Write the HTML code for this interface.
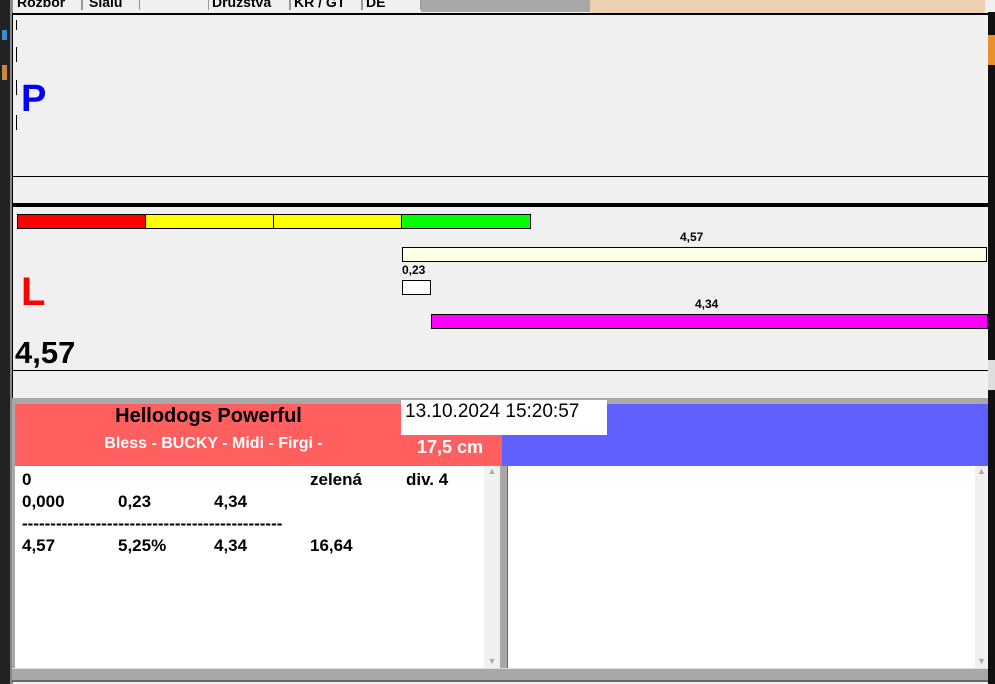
<!DOCTYPE html>
<html><head><style>
*{margin:0;padding:0;box-sizing:border-box}
body{width:995px;height:684px;overflow:hidden;background:#f0f0f0;font-family:"Liberation Sans",Arial,sans-serif;position:relative}
.a{position:absolute}
.b{font-weight:bold}
</style></head><body>
<div class="a" style="left:0;top:0;width:995px;height:13px;background:#f0f0f0"></div>
<div class="a" style="left:421px;top:0;width:169px;height:12px;background:#a8a8a8"></div>
<div class="a" style="left:590px;top:0;width:395px;height:13px;background:#ecd0b0"></div>
<div class="a" style="left:12px;top:-7px;width:410px;height:17px;font-size:14px;font-weight:bold;white-space:nowrap;overflow:hidden">
<span style="display:inline-block;border:1px solid #999;padding:0 4px;width:70px">Rozbor</span><span style="display:inline-block;border:1px solid #999;padding:0 6px;width:58px">Slalu</span><span style="display:inline-block;width:68px"></span><span style="display:inline-block;border:1px solid #999;padding:0 3px;width:82px">Družstva</span><span style="display:inline-block;border:1px solid #999;padding:0 3px;width:72px">KR / GT</span><span style="display:inline-block;border:1px solid #999;padding:0 3px;width:59px">DE</span></div>
<div class="a" style="left:0;top:0;width:10px;height:684px;background:#222"></div>
<div class="a" style="left:2px;top:30px;width:5px;height:10px;background:#3a8ad0"></div>
<div class="a" style="left:2px;top:65px;width:5px;height:15px;background:#c88a3a"></div>
<div class="a" style="left:10px;top:0;width:3px;height:684px;background:#888"></div>
<div class="a" style="left:988px;top:12px;width:7px;height:672px;background:#111"></div>
<div class="a" style="left:988px;top:35px;width:7px;height:30px;background:#e8902a"></div>
<div class="a" style="left:988px;top:360px;width:7px;height:30px;background:#ddd"></div>
<div class="a" style="left:12px;top:13px;width:976px;height:2px;background:#000"></div>
<div class="a" style="left:12px;top:15px;width:1px;height:385px;background:#000"></div>
<div class="a" style="left:16px;top:20px;width:1px;height:10px;background:#000"></div>
<div class="a" style="left:16px;top:47px;width:1px;height:15px;background:#000"></div>
<div class="a" style="left:16px;top:80px;width:1px;height:15px;background:#000"></div>
<div class="a" style="left:16px;top:115px;width:1px;height:15px;background:#000"></div>
<div class="a b" style="left:21px;top:80px;font-size:38px;color:#0000ff;line-height:1">P</div>
<div class="a" style="left:12px;top:176px;width:976px;height:1px;background:#000"></div>
<div class="a" style="left:12px;top:203px;width:976px;height:4px;background:#000"></div>
<div class="a" style="left:17px;top:214px;width:129px;height:15px;background:#f00;border:1px solid #000"></div>
<div class="a" style="left:145px;top:214px;width:129px;height:15px;background:#ff0;border:1px solid #000"></div>
<div class="a" style="left:273px;top:214px;width:129px;height:15px;background:#ff0;border:1px solid #000"></div>
<div class="a" style="left:401px;top:214px;width:130px;height:15px;background:#0f0;border:1px solid #000"></div>
<div class="a b" style="left:680px;top:230px;font-size:12px">4,57</div>
<div class="a" style="left:402px;top:247px;width:585px;height:15px;background:#ffffe6;border:1px solid #000"></div>
<div class="a b" style="left:402px;top:263px;font-size:12px">0,23</div>
<div class="a" style="left:402px;top:280px;width:29px;height:15px;background:#fff;border:1px solid #000"></div>
<div class="a b" style="left:695px;top:297px;font-size:12px">4,34</div>
<div class="a" style="left:431px;top:314px;width:557px;height:15px;background:#f0f;border:1px solid #000"></div>
<div class="a b" style="left:21px;top:272px;font-size:40px;color:#f00;line-height:1">L</div>
<div class="a b" style="left:15px;top:337px;font-size:31px;line-height:1">4,57</div>
<div class="a" style="left:12px;top:370px;width:976px;height:1px;background:#000"></div>
<div class="a" style="left:12px;top:398px;width:976px;height:6px;background:#a8a8a8"></div>
<div class="a" style="left:15px;top:404px;width:487px;height:62px;background:#ff5f5f"></div>
<div class="a" style="left:502px;top:404px;width:486px;height:62px;background:#6060ff"></div>
<div class="a b" style="left:15px;top:405px;width:387px;text-align:center;font-size:20px">Hellodogs Powerful</div>
<div class="a b" style="left:15px;top:435px;width:397px;text-align:center;font-size:16px;color:#fff">Bless - BUCKY - Midi - Firgi -</div>
<div class="a b" style="left:417px;top:437px;font-size:18px;color:#fff">17,5 cm</div>
<div class="a" style="left:401px;top:400px;width:206px;height:35px;background:#fff"></div>
<div class="a" style="left:405px;top:401px;font-size:19px">13.10.2024 15:20:57</div>
<div class="a" style="left:12px;top:404px;width:3px;height:270px;background:#a8a8a8"></div>
<div class="a" style="left:15px;top:466px;width:469px;height:202px;background:#fff"></div>
<div class="a" style="left:484px;top:466px;width:16px;height:202px;background:#f0f0f0;color:#aaa;font-size:9px;text-align:center">▲<div style="position:absolute;bottom:2px;width:16px">▼</div></div>
<div class="a" style="left:500px;top:466px;width:8px;height:202px;background:#a8a8a8;border-right:1px solid #666"></div>
<div class="a" style="left:508px;top:466px;width:467px;height:202px;background:#fff"></div>
<div class="a" style="left:975px;top:466px;width:13px;height:202px;background:#f0f0f0;color:#aaa;font-size:9px;text-align:center">▲<div style="position:absolute;bottom:2px;width:13px">▼</div></div>
<div class="a" style="left:12px;top:668px;width:976px;height:14px;background:#a8a8a8;border-top:1px solid #ddd;border-bottom:2px solid #666"></div>
<div class="a b" style="left:22px;top:469px;font-size:17px;line-height:22px;width:470px">
<div style="position:relative;height:22px"><span class="a" style="left:0">0</span><span class="a" style="left:288px">zelená</span><span class="a" style="left:384px">div. 4</span></div>
<div style="position:relative;height:22px"><span class="a" style="left:0">0,000</span><span class="a" style="left:96px">0,23</span><span class="a" style="left:192px">4,34</span></div>
<div style="height:22px;white-space:nowrap">----------------------------------------------</div>
<div style="position:relative;height:22px"><span class="a" style="left:0">4,57</span><span class="a" style="left:96px">5,25%</span><span class="a" style="left:192px">4,34</span><span class="a" style="left:288px">16,64</span></div>
</div>
</body></html>
